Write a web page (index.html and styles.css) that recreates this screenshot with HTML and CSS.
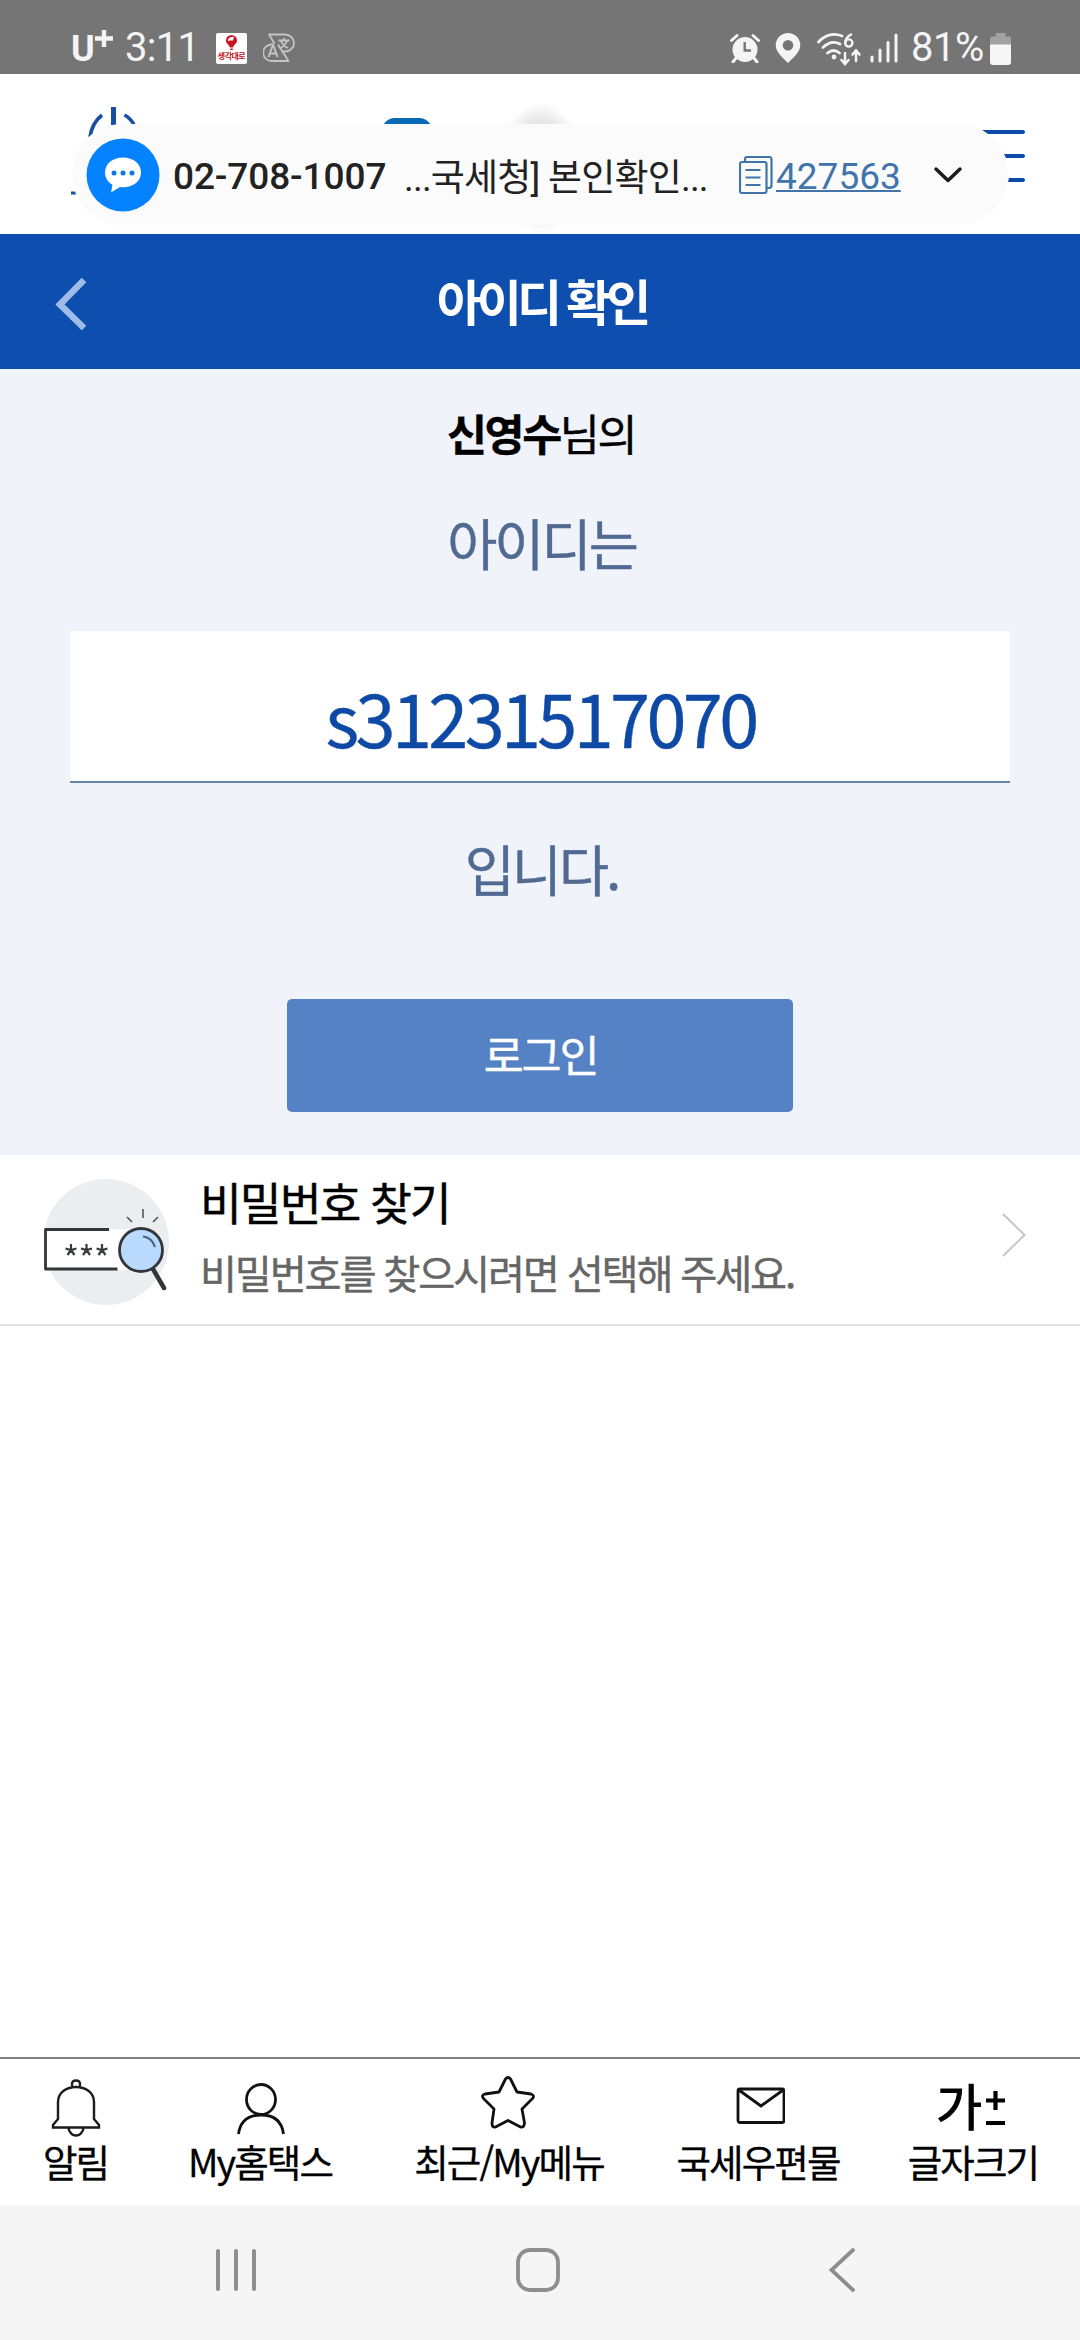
FILE: index.html
```html
<!DOCTYPE html>
<html lang="ko">
<head>
<meta charset="utf-8">
<title>아이디 확인</title>
<link rel="stylesheet" href="styles.css">
</head>
<body>
<div class="screen">
  <div class="status">
    <span class="carrier">U<svg width="18" height="17" viewBox="0 0 18 17" stroke="#f4f4f4" stroke-width="4.400"><path d="M9 0v17M0 8.500h18"/></svg></span>
    <span class="clock">3:11</span>
    <span class="app-badge">
      <svg width="31" height="18" viewBox="0 0 31 18"><path d="M15.500 2a5.500 5.500 0 0 0-5.500 5.500c0 3 3 4 4 7h3c1-3 4-4 4-7a5.500 5.500 0 0 0-5.500-5.500z" fill="#d01020"/><path d="M12 6.500q2-3.500 6-2.500l-1 3.500-3.500 0-1.500 1z" fill="#fff"/><rect x="14.300" y="15.500" width="2.500" height="1.500" fill="#d01020"/></svg>
      <span>생각대로</span>
    </span>
    <svg class="translate" width="32" height="30" viewBox="0 0 32 30" fill="none" stroke="#c4c4c4" stroke-width="1.800">
      <path d="M11.500 10.500L6 1.500h16a9 8.500 0 0 1 0 17h-3.500M15 11.500L25.500 28H9a8 8 0 0 1-1-16.500l3.500-1" stroke-linejoin="round"/>
      <path d="M5.500 24l4-11h1l4 11M7 20.500h6" stroke-width="2"/>
      <path d="M15.500 7.500h11M21 5v2.500M24 8q-2 5-7 7M18 8q2 5 7 7"/>
    </svg>
    <div class="status-right">
      <svg class="alarm" width="30" height="30" viewBox="0 0 30 30"><circle cx="15" cy="16.500" r="12.500" fill="#f4f4f4"/><path d="M1.500 7.500l5.500-5M28.500 7.500l-5.500-5M6 25l-3 4M24 25l3 4" stroke="#f4f4f4" stroke-width="3" stroke-linecap="round"/><path d="M14.700 9v8.500H21" stroke="#757575" stroke-width="2.400" fill="none"/></svg>
      <svg class="pin" width="26" height="30" viewBox="0 0 26 30"><path fill-rule="evenodd" fill="#f4f4f4" d="M13 0a12.300 12.300 0 0 0-12.300 12.300C.7 19 8 25 13 30c5-5 12.300-11 12.300-17.700A12.300 12.300 0 0 0 13 0zm0 7a5.300 5.300 0 1 1 0 10.600A5.300 5.300 0 0 1 13 7z"/></svg>
      <svg class="wifi" width="44" height="33" viewBox="0 0 44 33" fill="none" stroke="#f4f4f4" stroke-width="2.800" stroke-linecap="round"><path d="M1.500 9Q12-2 25 3M6 14.500Q14 6.500 23 11M10.500 20q6-5 12 0"/><circle cx="17" cy="24" r="1" fill="#f4f4f4"/><path d="M34 1.500q-5.500 3-5.800 8.500M28 20v10.500M24.500 27l3.500 4 3.500-4M39 28V18M35.500 21.500l3.500-4 3.500 4" stroke-width="2.500"/><circle cx="31.800" cy="10" r="3.600" stroke-width="2.400"/></svg>
      <svg class="signal" width="28" height="30" viewBox="0 0 28 30" stroke="#f4f4f4" stroke-width="3" stroke-linecap="round"><path d="M2 24v4M10 17v11M18 9.500V28M26 2v26"/></svg>
      <span class="percent">81%</span>
      <svg class="battery" width="21" height="32" viewBox="0 0 21 32"><path d="M5.500 0h10v3.500H19a2 2 0 0 1 2 2V12H0V5.500a2 2 0 0 1 2-2h3.500z" fill="#a2a2a2"/><path d="M0 11.500h21V29a3 3 0 0 1-3 3H3a3 3 0 0 1-3-3z" fill="#f6f6f6"/></svg>
    </div>
  </div>

  <div class="brand-header">
    <svg width="1080" height="160" viewBox="0 74 1080 160" fill="none" stroke="#174fa2">
      <path d="M113.500 107v18" stroke-width="5"/>
      <path d="M90 137Q92 123 102 115M124.500 115Q130 118 134 124.500" stroke-width="3.600"/>
      <path d="M71 193h5.500" stroke-width="3"/>
      <path d="M383 125Q388 118 394 118h26q6 0 11 7z" fill="#0969b5" stroke="none"/>
      <path d="M982 130h41q2 0 2 2t-2 2h-35zM1004 154h19q2 0 2 2t-2 2h-17zM1009 178h14q2 0 2 2t-2 2h-15z" fill="#0c4ca6" stroke="none"/>
    </svg>
    <div class="shade"></div>
    <div class="notice">
      <svg class="bubble" width="74" height="74" viewBox="0 0 74 74"><circle cx="37" cy="37" r="36.500" fill="#0482ff"/><path d="M37 19.500c-10.500 0-18 6.500-18 15 0 5.500 3 9.700 7.500 12.200L25 54.500l9-5.500c12 1.500 21-5 21-14.500 0-8.500-7.500-15-18-15z" fill="#fff"/><g fill="#0b78e6"><circle cx="28" cy="35" r="2.500"/><circle cx="37" cy="35" r="2.500"/><circle cx="46" cy="35" r="2.500"/></g></svg>
      <span class="sender">02-708-1007</span>
      <span class="preview">...국세청] 본인확인...</span>
      <svg class="copy" width="34" height="38" viewBox="0 0 34 38" fill="none" stroke="#4274ac" stroke-width="2.200"><rect x="1" y="6" width="26.500" height="31" rx="2"/><path d="M6 6V3q0-2 2-2h22q2.500 0 2.500 2.500v26Q32.500 32 30 32h-2.500M6.500 14h15M6.500 21.500h15M6.500 29h15"/></svg>
      <span class="code">427563</span>
      <svg class="chev" width="30" height="18" viewBox="0 0 30 18" fill="none" stroke="#1c1c1c" stroke-width="3.500" stroke-linecap="round" stroke-linejoin="round"><path d="M3 3l12 11.500L27 3"/></svg>
    </div>
  </div>

  <div class="title-bar">
    <svg width="34" height="54" viewBox="0 0 34 54" fill="none" stroke="#a0bbe8" stroke-width="6.500"><path d="M31 4L7 28.500 31 52"/></svg>
    <h1>아이디 확인</h1>
  </div>

  <main class="result">
    <p class="name"><b>신영수</b>님의</p>
    <p class="lead">아이디는</p>
    <div class="id-box"><span>s31231517070</span></div>
    <p class="tail">입니다.</p>
    <div class="login"><span>로그인</span></div>
  </main>

  <div class="find">
    <svg class="find-icon" width="128" height="128" viewBox="0 0 128 128">
      <circle cx="62" cy="64" r="63" fill="#ecedf1"/>
      <path d="M1 51h94v41H1z" fill="#fff"/>
      <path d="M65 51.500H1.500V91h72" fill="none" stroke="#333538" stroke-width="2.800" stroke-linejoin="round"/>
      <path d="M27 66v6M21.500 70.500l5.500 1.500 5.500-1.500M23.500 77l3.500-5 3.500 5M42.500 66v6M37 70.500l5.500 1.500 5.500-1.500M39 77l3.500-5 3.500 5M58 66v6M52.500 70.500l5.500 1.500 5.500-1.500M54.500 77l3.500-5 3.500 5" fill="none" stroke="#383a3d" stroke-width="2.200"/>
      <path d="M109 91l11 19" stroke="#333538" stroke-width="4.500" stroke-linecap="round"/>
      <circle cx="97" cy="72" r="21.500" fill="#b9d9fd" stroke="#333538" stroke-width="2.800"/>
      <path d="M99 58.500q9 1 12 10.500" fill="none" stroke="#47617c" stroke-width="2"/>
      <path d="M99 31v9M83 39l5 5M114 39l-5 5" stroke="#555" stroke-width="1.600"/>
    </svg>
    <div class="find-text">
      <p class="find-title">비밀번호 찾기</p>
      <p class="find-sub">비밀번호를 찾으시려면 선택해 주세요.</p>
    </div>
    <svg class="go" width="26" height="44" viewBox="0 0 26 44" fill="none" stroke="#c6c6c6" stroke-width="2"><path d="M2 1l21.500 21L2 43"/></svg>
  </div>

  <nav class="tabs">
    <div class="tab t1"><svg width="50" height="60" viewBox="0 0 50 60" fill="none" stroke="#1b1b1b" stroke-width="2.400"><path d="M7 41V24C7 4 43 4 43 24v17l5 6v2.500H2V47zM21 8V6q0-3.500 4-3.500t4 3.500v2M17.500 50.500q2 7 7.500 7t7.500-7"/></svg><span>알림</span></div>
    <div class="tab t2"><svg width="50" height="60" viewBox="0 0 50 60" fill="none" stroke="#111" stroke-width="2.800"><ellipse cx="26" cy="21.500" rx="14.500" ry="15"/><path d="M3.500 56Q6 37 26 37t22.500 19"/></svg><span>My홈택스</span></div>
    <div class="tab t3"><svg class="star" width="56" height="60" viewBox="0 2 56 60" fill="none" stroke="#111" stroke-width="2.800" stroke-linejoin="round"><path d="M29.500 3L36 16l14 2q4 1.500 1.500 4.500L41 33l2.500 14q-.5 5-4 4L27 44.500 14.500 51q-3.500 1-3.500-4l2-14L2.500 22.500q-2.500-3.500 1.500-4.500l14-2L24.500 3q2.500-3 5 0z"/></svg><span>최근/My메뉴</span></div>
    <div class="tab t4"><svg width="50" height="60" viewBox="0 0 50 60" fill="none" stroke="#111" stroke-width="2.800" stroke-linejoin="round"><rect x="3" y="11" width="46" height="33.500" rx="2"/><path d="M4.500 12.500L26 28l21.500-15.500"/></svg><span>국세우편물</span></div>
    <div class="tab t5"><div class="size-icon"><span>가</span><svg width="19" height="36" viewBox="0 0 19 36" stroke="#000" stroke-width="4.200"><path d="M9.500 0v19M0 9.500h19M0 32h19"/></svg></div><span>글자크기</span></div>
  </nav>

  <div class="system-nav">
    <svg width="44" height="46" viewBox="0 0 44 46" stroke="#8e8e8e" stroke-width="4" stroke-linecap="round"><path d="M4 4v38M22 4v38M40 4v38"/></svg>
    <svg class="home" width="46" height="46" viewBox="0 0 46 46" fill="none" stroke="#8e8e8e" stroke-width="3.800"><rect x="3" y="3" width="40" height="40" rx="12"/></svg>
    <svg width="28" height="46" viewBox="0 0 28 46" fill="none" stroke="#8e8e8e" stroke-width="3.800" stroke-linecap="round"><path d="M25 3L3.500 23 25 43"/></svg>
  </div>
</div>
</body>
</html>
```
FILE: styles.css
```css
* { box-sizing: border-box; }
body { margin: 0; background: #fff; font-family: "Noto Sans CJK KR", sans-serif; }
p, h1 { margin: 0; }
svg { display: block; flex: none; }
.screen { width: 1080px; height: 2340px; display: flex; flex-direction: column; overflow: hidden; }
.screen > * { flex: none; }

.status { height: 74px; background: #757575; display: flex; padding: 33px 69px 0 71px; color: #f4f4f4; font-family: Roboto, sans-serif; font-size: 40px; line-height: 30px; white-space: nowrap; }
.carrier { width: 54px; font-family: Roboto, sans-serif; font-weight: 700; font-size: 36px; line-height: 32px; display: flex; }
.carrier svg { margin: -3px 0 0 0; }
.clock { width: 91px; letter-spacing: -0.7px; }
.app-badge { width: 31px; height: 31px; background: #fff; border-radius: 2px; color: #c01020; font: 700 8px/9px "Noto Sans CJK KR", sans-serif; text-align: center; letter-spacing: -0.5px; margin-right: 16px; }
.app-badge span { display: block; }
.status-right { margin-left: auto; display: flex; }
.pin { margin-left: 15px; }
.wifi { margin-left: 16px; }
.signal { margin-left: 9px; }
.percent { margin-left: 13px; width: 79px; letter-spacing: -0.5px; }

.brand-header { height: 160px; position: relative; background: #fff; }
.shade { position: absolute; left: 498px; top: 28px; width: 86px; height: 131px; background: radial-gradient(closest-side, #d4d4d4 50%, #fff0); }
.notice { position: absolute; left: 72px; top: 50px; width: 936px; height: 101px; border-radius: 51px; background: #fbfbfb; display: flex; align-items: center; padding-left: 14px; color: #222; font-family: Roboto, "Noto Sans CJK KR", sans-serif; font-size: 37px; white-space: nowrap; }
.sender { margin-left: 13px; width: 231px; font-weight: 500; padding-top: 3px; letter-spacing: -0.1px; }
.preview { width: 335px; letter-spacing: -0.8px; }
.code { color: #4274ac; text-decoration: underline; text-decoration-thickness: 2px; margin-left: 3px; width: 157px; padding-top: 3px; }

.title-bar { height: 135px; background: #0d4eaf; display: grid; grid-template-columns: 1fr auto 1fr; align-items: center; padding: 2px 53px 0; }
.title-bar h1 { color: #fff; font-size: 49px; font-weight: 700; letter-spacing: -0.1em; margin: -7px 0 0 3px; }

.result { height: 786px; background: #f1f3fa; display: flex; flex-direction: column; align-items: center; padding-top: 32px; color: #516a92; -webkit-text-stroke: 0.4px; }
.name { color: #000; font-size: 43.500px; line-height: 64px; letter-spacing: -0.055em; padding-left: 2px; }
.lead { font-size: 54.500px; line-height: 80px; margin-top: 37px; letter-spacing: -0.055em; padding-left: 3px; }
.id-box { width: 940px; height: 152px; margin-top: 49px; background: #fff; border-bottom: 2px solid #6388a6; display: flex; justify-content: center; color: #0e4aa5; font-size: 72px; line-height: 172px; letter-spacing: -0.05em; padding-left: 1px; }
.tail { font-size: 54.500px; line-height: 80px; margin-top: 45px; letter-spacing: -0.055em; padding-left: 3px; }
.login { width: 506px; height: 113px; margin-top: 91px; border-radius: 5px; background: #5582c4; color: #fff; font-size: 43.500px; letter-spacing: -0.05em; display: flex; align-items: center; justify-content: center; padding: 0 0 4px 1px; }

.find { height: 171px; border-bottom: 2px solid #e2e2e2; display: flex; align-items: flex-start; padding: 23px 53px 0 44px; white-space: nowrap; -webkit-text-stroke: 0.4px; }
.find-text { margin-left: 28px; flex: 1; }
.find-title { font-size: 45.500px; line-height: 52px; margin-top: -3px; color: #000; letter-spacing: -0.045em; }
.find-sub { font-size: 40.300px; line-height: 48px; margin-top: 21px; color: #666; letter-spacing: -0.055em; }
.go { margin-top: 35px; }

.tabs { margin-top: auto; height: 148px; border-top: 2px solid #808080; display: flex; padding: 19px 0 0 43px; font-size: 37.500px; letter-spacing: -0.05em; white-space: nowrap; color: #000; }
.tab > span { -webkit-text-stroke: 0.3px; }
.tab { display: flex; flex-direction: column; align-items: center; line-height: 46px; }
.star { overflow: visible; }
.t1 { width: 65px; } .t2 { margin-left: 80px; width: 144px; } .t3 { margin-left: 80px; width: 194px; } .t4 { margin-left: 69px; width: 166px; } .t5 { margin-left: 65px; width: 134px; }
.t4 svg { margin-left: 4px; }
.size-icon { height: 60px; display: flex; line-height: 53px; font-size: 50px; margin-right: 5px; -webkit-text-stroke: 1px #000; }
.size-icon svg { margin: 13px 0 0 6px; }

.system-nav { height: 135px; background: #f5f5f5; display: flex; padding: 42px 224px 0 214px; justify-content: space-between; }
.home { margin-right: 10px; }
```
